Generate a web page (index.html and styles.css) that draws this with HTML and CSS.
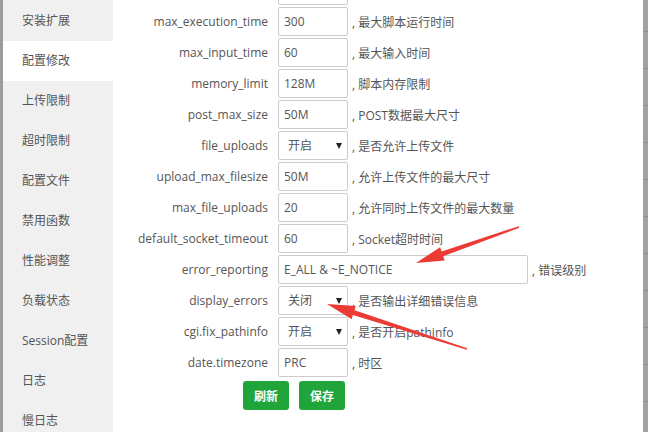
FILE: index.html
```html
<!DOCTYPE html>
<html lang="zh-CN">
<head>
    <meta charset="UTF-8">
    <title>PHP 配置修改</title>
    <link rel="stylesheet" href="styles.css">
</head>
<body>
  <div class="edge"></div>

  <ul class="side-menu">
    <li>安装扩展</li>
    <li class="active">配置修改</li>
    <li>上传限制</li>
    <li>超时限制</li>
    <li>配置文件</li>
    <li>禁用函数</li>
    <li>性能调整</li>
    <li>负载状态</li>
    <li>Session配置</li>
    <li>日志</li>
    <li>慢日志</li>
  </ul>

  <div class="main">
    <form class="conf-form">
      <div class="line">
        <span class="tname">asp_tags</span>
        <span class="sel"><select><option>关闭</option></select></span>
        <span class="tip">, ASP标签支持</span>
      </div>
      <div class="line">
        <span class="tname">max_execution_time</span>
        <input type="text" value="300">
        <span class="tip">, 最大脚本运行时间</span>
      </div>
      <div class="line">
        <span class="tname">max_input_time</span>
        <input type="text" value="60">
        <span class="tip">, 最大输入时间</span>
      </div>
      <div class="line">
        <span class="tname">memory_limit</span>
        <input type="text" value="128M">
        <span class="tip">, 脚本内存限制</span>
      </div>
      <div class="line">
        <span class="tname">post_max_size</span>
        <input type="text" value="50M">
        <span class="tip">, POST数据最大尺寸</span>
      </div>
      <div class="line">
        <span class="tname">file_uploads</span>
        <span class="sel"><select><option>开启</option><option>关闭</option></select></span>
        <span class="tip">, 是否允许上传文件</span>
      </div>
      <div class="line">
        <span class="tname">upload_max_filesize</span>
        <input type="text" value="50M">
        <span class="tip">, 允许上传文件的最大尺寸</span>
      </div>
      <div class="line">
        <span class="tname">max_file_uploads</span>
        <input type="text" value="20">
        <span class="tip">, 允许同时上传文件的最大数量</span>
      </div>
      <div class="line">
        <span class="tname">default_socket_timeout</span>
        <input type="text" value="60">
        <span class="tip">, Socket超时时间</span>
      </div>
      <div class="line">
        <span class="tname">error_reporting</span>
        <input type="text" class="wide" value="E_ALL &amp; ~E_NOTICE">
        <span class="tip">, 错误级别</span>
      </div>
      <div class="line">
        <span class="tname">display_errors</span>
        <span class="sel"><select><option>关闭</option><option>开启</option></select></span>
        <span class="tip">, 是否输出详细错误信息</span>
      </div>
      <div class="line">
        <span class="tname">cgi.fix_pathinfo</span>
        <span class="sel"><select><option>开启</option><option>关闭</option></select></span>
        <span class="tip">, 是否开启pathinfo</span>
      </div>
      <div class="line">
        <span class="tname">date.timezone</span>
        <input type="text" value="PRC">
        <span class="tip">, 时区</span>
      </div>
      <div class="btns">
        <button type="button" class="btn-green">刷新</button>
        <button type="button" class="btn-green">保存</button>
      </div>
    </form>
  </div>

  <div class="scroll-bar"></div>

  <!-- annotation arrows drawn on top of the screenshot -->
  <svg class="marks" width="648" height="432" viewBox="0 0 648 432">
    <polygon points="518.7,226.2 441.6,251.4 440.1,247.2 416,263 444.7,260.4 443.2,256.2 519.3,227.8" />
    <polygon points="467.2,348.2 354.5,310.2 355.8,305.9 327,304 351.6,319.3 352.9,315 466.8,349.8" />
  </svg>
</body>
</html>
```

FILE: styles.css
```css
body {
    margin: 0;
    padding: 0;
    width: 648px;
    height: 432px;
    overflow: hidden;
    display: flex;
    position: relative;
    background: #fff;
    font-family: "Open Sans", "Noto Sans CJK SC", sans-serif;
    font-size: 12px;
    color: #555;
}
.edge {
    width: 3px;
    background-color: #9c9c9c;
}
.side-menu {
    list-style: none;
    margin: 0;
    padding: 1px 0 0 0;
    width: 110px;
    background-color: #f0f0f0;
}
.side-menu li {
    height: 40px;
    line-height: 40px;
    padding-left: 19px;
    color: #555;
}
.side-menu li.active {
    background-color: #fff;
}
.main {
    flex: 1;
}
.conf-form {
    margin-top: -24px;
}
.line {
    display: flex;
    align-items: center;
    height: 29px;
    margin-bottom: 2px;
}
.tname {
    width: 155px;
    text-align: right;
    margin-right: 10px;
    color: #555;
}
.line input[type="text"] {
    box-sizing: border-box;
    width: 70px;
    height: 29px;
    padding: 0 5px;
    border: 1px solid #ccc;
    border-radius: 2px;
    font-family: "Open Sans", "Noto Sans CJK SC", sans-serif;
    font-size: 12px;
    color: #555;
    outline: none;
}
.line input.wide {
    width: 250px;
}
.sel {
    position: relative;
    display: inline-block;
}
.sel select {
    box-sizing: border-box;
    width: 70px;
    height: 29px;
    padding: 0 0 0 9px;
    border: 1px solid #ccc;
    border-radius: 2px;
    background: #fff;
    -webkit-appearance: none;
    appearance: none;
    font-family: "Open Sans", "Noto Sans CJK SC", sans-serif;
    font-size: 12px;
    color: #555;
    outline: none;
}
.sel::after {
    content: "";
    position: absolute;
    right: 6px;
    top: 12px;
    border-left: 3.5px solid transparent;
    border-right: 3.5px solid transparent;
    border-top: 6px solid #222;
}
.tip {
    margin-left: 4px;
    color: #555;
}
.btns {
    display: flex;
    gap: 10px;
    padding-left: 130px;
    margin-top: 4px;
}
.btn-green {
    width: 46px;
    height: 29px;
    border: none;
    border-radius: 3px;
    background-color: #20a53a;
    color: #fff;
    font-family: "Noto Sans CJK SC", sans-serif;
    font-size: 12px;
    font-weight: bold;
    cursor: pointer;
}
.scroll-bar {
    width: 5px;
    background-color: #a2a2a2;
    background-image: repeating-linear-gradient(to bottom, transparent 0, transparent 31px, #8c8c8c 31px, #8c8c8c 32px, transparent 32px, transparent 37px);
}
.marks {
    position: absolute;
    left: 0;
    top: 0;
    pointer-events: none;
}
.marks polygon {
    fill: #ec3a35;
}
```
